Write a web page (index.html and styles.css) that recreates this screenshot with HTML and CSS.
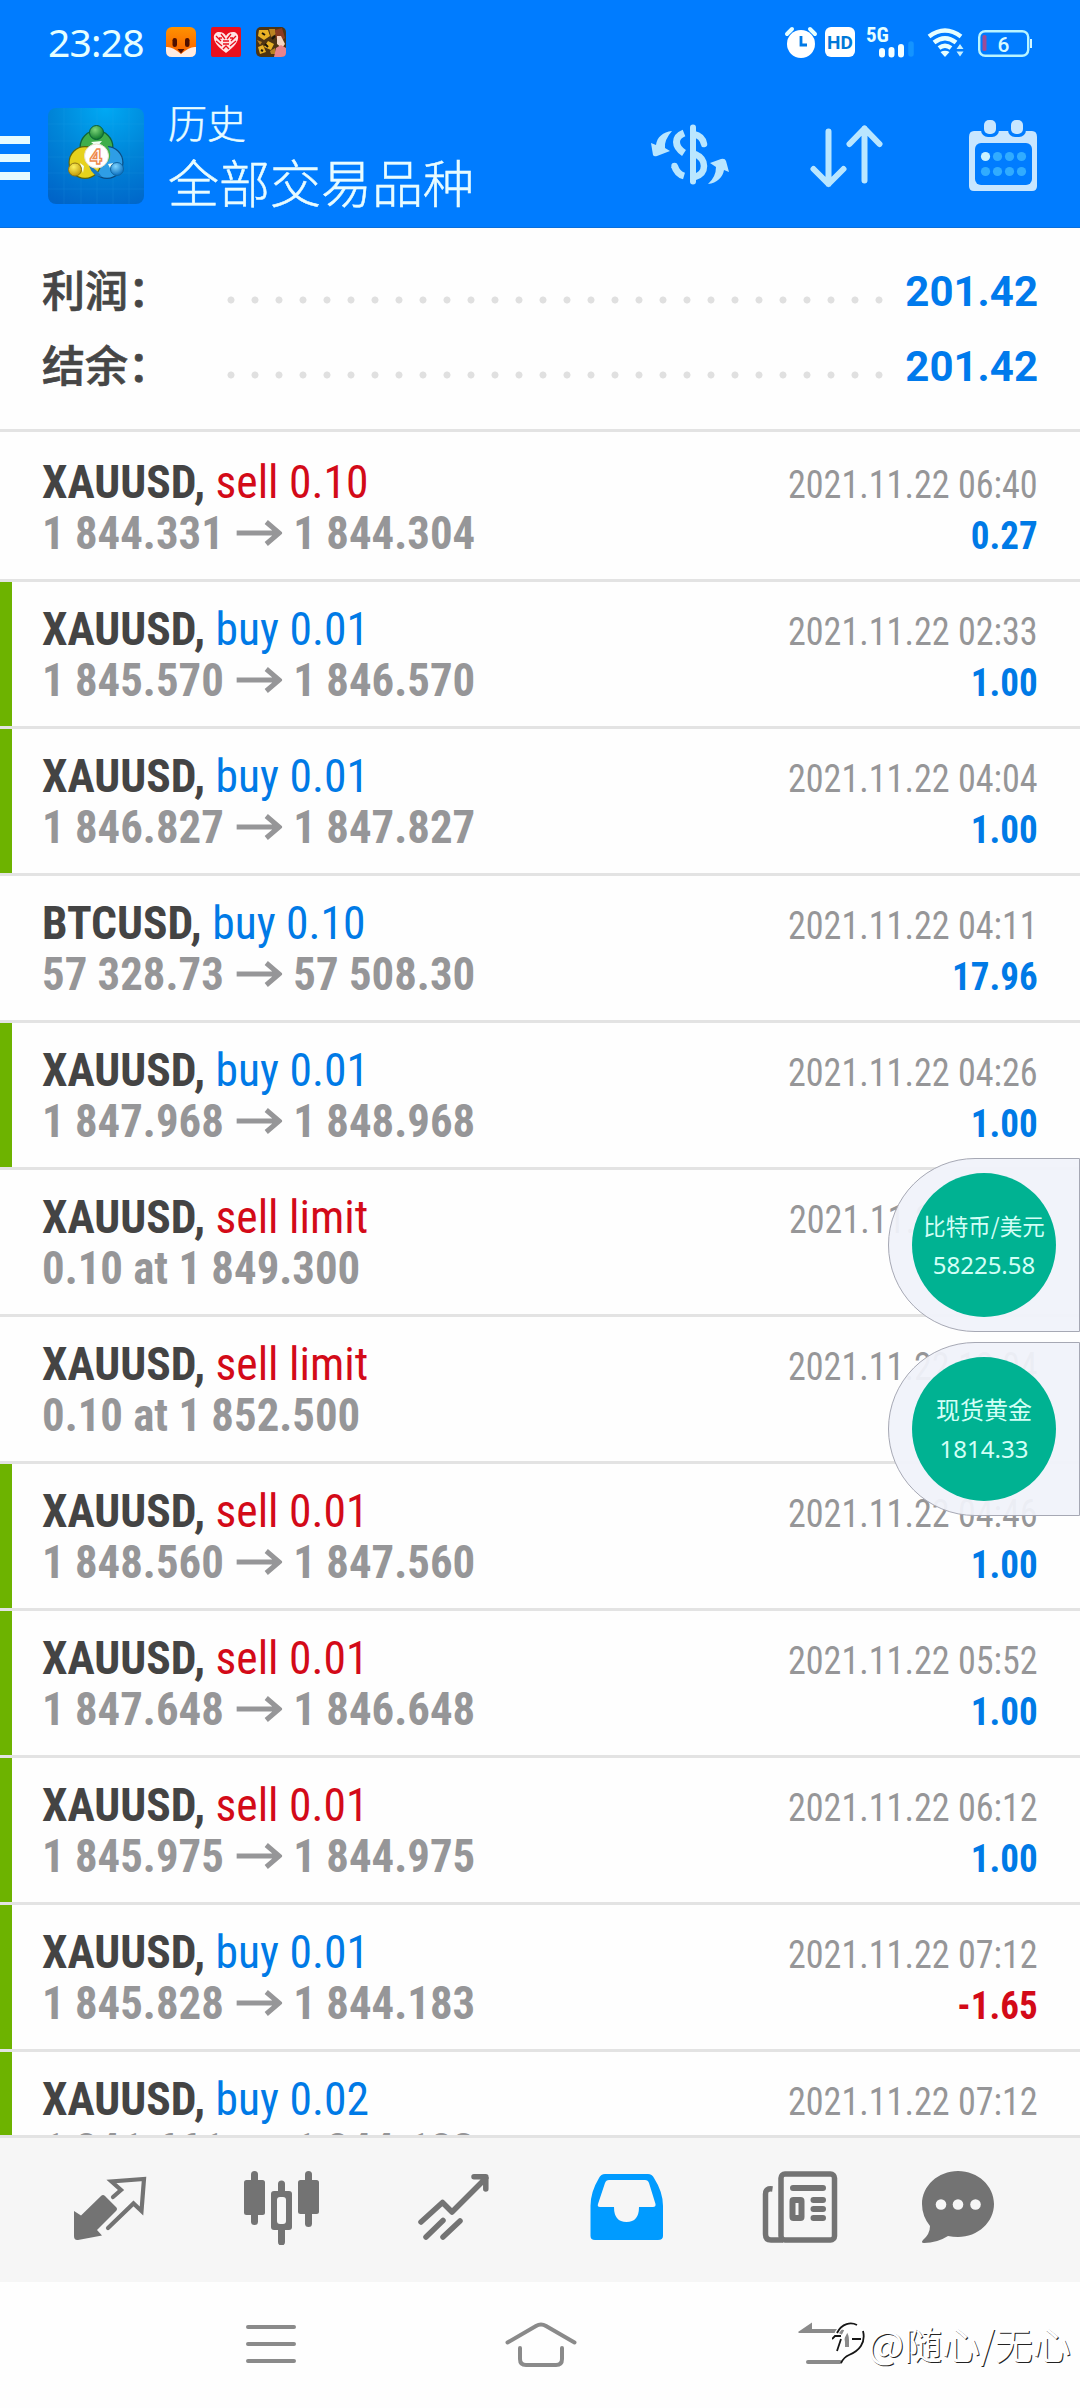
FILE: index.html
```
<!DOCTYPE html>
<html lang="zh-CN">
<head>
<meta charset="utf-8">
<title>历史</title>
<link rel="stylesheet" href="styles.css">
</head>
<body>
<header class="header">
  <div class="status">
    <span class="clock">23:28</span>
    <div class="notifications">
      <svg width="30" height="30" viewBox="0 0 30 30"><defs><linearGradient id="fox" x1="0" y1="0" x2="0" y2="1"><stop offset="0" stop-color="#ff9200"/><stop offset="1" stop-color="#f85c00"/></linearGradient></defs><rect width="30" height="30" rx="6" fill="url(#fox)"/><path d="M0 20Q6 19 15 27Q24 19 30 20V24Q30 30 24 30H6Q0 30 0 24Z" fill="#ffece2"/><rect x="6.500" y="11" width="4.500" height="9" rx="2.200" fill="#501000"/><rect x="19" y="11" width="4.500" height="9" rx="2.200" fill="#501000"/><path d="M11.500 22h7L15 26.500z" fill="#501000"/></svg>
      <svg width="30" height="30" viewBox="0 0 30 30"><rect width="30" height="30" rx="2" fill="#e9101d"/><path d="M15 26C-2 14 2 5 8 5Q13 5 15 9Q17 5 22 5C28 5 32 14 15 26Z" fill="#ffe4e4"/><path d="M5 9l5 5M10 7l4 5M20 7l-4 5M25 9l-5 5M5 14l6 5M25 14l-6 5M12 22l3-3 3 3M12 14h6M12 17h6M8 11h3M19 11h3" stroke="#e9101d" stroke-width="1.300" fill="none"/></svg>
      <svg width="30" height="30" viewBox="0 0 30 30"><rect width="30" height="30" rx="5" fill="#4e3413"/><path d="M3 3h9l2 6-6 4-6-4zM12 14l6 3-3 6-7-3zM2 20l5-2 3 7-6 2z" fill="#e8b125"/><path d="M13 2h6l1 5-5 3zM1 13l5 2-2 3zM14 24l5-3 1 6h-5z" fill="#b98222"/><path d="M19 3l7-2 3 10-5 4-4-4z" fill="#8a3b22"/><path d="M21 9l4 0 4 8-3 4-5-4z" fill="#f5d3c0"/><path d="M20 21l5-3 5 3v5q0 4-5 4h-7z" fill="#e8838b"/><path d="M6 6l3 2M9 17l3 3M16 12l3-3M5 23l2 1" stroke="#171309" stroke-width="2"/></svg>
    </div>
    <div class="signals">
      <svg width="250" height="34" viewBox="784 26 250 34">
        <circle cx="801" cy="44" r="14" fill="#fff"/><path d="M787 34l5-5M815 34l-5-5" stroke="#e6ffff" stroke-width="4" stroke-linecap="round"/><path d="M801 36v9h6" fill="none" stroke="#0079e6" stroke-width="2.800"/>
        <rect x="825" y="27" width="30" height="30" rx="6" fill="#fff"/>
        <text x="840" y="49" class="hd">HD</text>
        <text x="866" y="42" class="five">5G</text>
        <path d="M882 51v3.500M891.500 50v4.500M901 47v7.500" stroke="#f4ffff" stroke-width="6" stroke-linecap="round"/><path d="M911 44v10" stroke="#1494ff" stroke-width="5.500" stroke-linecap="round"/>
        <path d="M929 36.500Q945 24.500 961 36.500" fill="none" stroke="#e6ffff" stroke-width="4.500"/><path d="M934 42.500Q945 34 956 42.500" fill="none" stroke="#e6ffff" stroke-width="4.500"/><path d="M939 48Q945 43.500 951 48" fill="none" stroke="#e6ffff" stroke-width="4.500"/><path d="M940.500 52Q945 49.500 949.500 52L945 57Z" fill="#e6ffff"/>
        <path d="M956.500 49l3.500-5 3.500 5zM956.500 51.500h7l-3.500 5z" fill="#c8f0ff"/>
        <rect x="979.200" y="31.200" width="49" height="24.600" rx="6" fill="none" stroke="#b8f4ff" stroke-width="2.400"/><path d="M1031 39v9" stroke="#d5f8ff" stroke-width="2"/><rect x="982.500" y="35" width="4" height="16" rx="1.500" fill="#9c4b96"/>
        <text x="1003.500" y="51.500" class="batt">6</text>
      </svg>
    </div>
  </div>
  <div class="appbar">
    <div class="menu"><i></i><i></i><i></i></div>
    <svg class="logo" width="96" height="96" viewBox="0 0 96 96">
      <defs>
        <radialGradient id="sky" cx=".6" cy="0" r="1.100"><stop offset="0" stop-color="#00a9f4"/><stop offset=".5" stop-color="#0085d8"/><stop offset="1" stop-color="#0064c8"/></radialGradient>
        <radialGradient id="g" cx=".4" cy=".3" r=".7"><stop offset="0" stop-color="#7fd67a"/><stop offset="1" stop-color="#0e7a2c"/></radialGradient>
        <radialGradient id="y" cx=".4" cy=".3" r=".7"><stop offset="0" stop-color="#fdf25e"/><stop offset="1" stop-color="#c39a08"/></radialGradient>
        <radialGradient id="b" cx=".4" cy=".3" r=".7"><stop offset="0" stop-color="#7ed4ff"/><stop offset="1" stop-color="#0a6fc0"/></radialGradient>
      </defs>
      <rect width="96" height="96" rx="8" fill="url(#sky)"/>
      <path d="M16 0V96M33 0V96M49 0V96M65 0V96M81 0V96M0 16H96M0 33H96M0 49H96M0 65H96M0 81H96" stroke="#35b4f2" stroke-opacity=".13"/>
      <circle cx="48.500" cy="39" r="17" fill="#116438"/><circle cx="48.500" cy="39" r="15.700" fill="#3fae4b"/>
      <circle cx="59" cy="54.500" r="16.500" fill="#0b4b80"/><circle cx="59" cy="54.500" r="15.300" fill="#2e9ee6"/>
      <circle cx="37" cy="54.500" r="16.500" fill="#5d6408"/><circle cx="37" cy="54.500" r="15.300" fill="#e6d21c"/>
      <path d="M41 58Q49 61 54 69Q45 69 41 58Z" fill="#1679c4"/>
      <path d="M56 33Q66 44 60 54L54 48Z" fill="#3fae4b"/>
      <path d="M43 34l11-1-5 6zM32 55l4 3-1 7zM60 56l6-1-3 7z" fill="#f2fff5"/>
      <circle cx="48.500" cy="24.500" r="7" fill="url(#g)" stroke="#0b5e38"/><circle cx="27" cy="61.500" r="6.500" fill="url(#y)" stroke="#907612"/><circle cx="69" cy="61" r="6.500" fill="url(#b)" stroke="#0d64a3"/>
      <circle cx="48.500" cy="48" r="12" fill="#fff" stroke="#e8e0cd"/>
      <text x="48" y="55.500" class="four">4</text>
    </svg>
    <div class="titles"><div class="title">历史</div><div class="subtitle">全部交易品种</div></div>
    <div class="actions">
      <svg width="80" height="70" viewBox="0 0 80 70" fill="none" stroke="#b9e6ff">
        <path d="M43 6.500v54" stroke-width="6" stroke-linecap="round"/>
        <path d="M54 23C53 17 48 14 43.500 13" stroke-width="6.500" stroke-linecap="round"/><path d="M34 12Q26.500 15 26.500 21T34 32" stroke-width="7"/>
        <path d="M45 33Q54 37 54 45T45 56" stroke-width="6.500"/><path d="M24.500 45Q27 53 34 55" stroke-width="7"/><circle cx="24.500" cy="45" r="3.200" fill="#b9e6ff" stroke="none"/>
        <path d="M22 10C13 11 7 16 6 24L1 22 3 34Q4 36 7 35L20 30 15 27Q14 19 22 10Z" fill="#b9e6ff" stroke="none"/>
        <path d="M58 63C67 62 73 56 74 49L79 51 76 40Q75 37 71 38L60 42 66 46Q66 56 58 63Z" fill="#b9e6ff" stroke="none"/>
      </svg>
      <svg width="74" height="66" viewBox="0 0 74 66" fill="none" stroke="#b9e6ff" stroke-width="6" stroke-linecap="round" stroke-linejoin="round"><path d="M18.500 8.500V61M3.500 46l15 15 15-15M54.500 57.500V5.500M39.500 21l15-15.500 15 15.500"/></svg>
      <svg width="70" height="72" viewBox="0 0 70 72"><path d="M6 11H64Q69 11 69 17V66Q69 71 64 71H6Q1 71 1 66V17Q1 11 6 11Z" fill="#c8e6ff"/><rect x="13" y="-4" width="18" height="21" rx="7" fill="#007cff"/><rect x="40" y="-4" width="18" height="21" rx="7" fill="#007cff"/><rect x="16" y="0" width="12" height="14" rx="5" fill="#c8e6ff"/><rect x="43" y="0" width="12" height="14" rx="5" fill="#c8e6ff"/><rect x="7" y="23" width="57" height="42" rx="6" fill="#007cff"/><circle cx="17.500" cy="36.500" r="4.600" fill="#c9f2ff"/><g fill="#31acff"><circle cx="29.500" cy="36.500" r="4.600"/><circle cx="41.500" cy="36.500" r="4.600"/><circle cx="53.500" cy="36.500" r="4.600"/><circle cx="17.500" cy="51.500" r="4.600"/><circle cx="29.500" cy="51.500" r="4.600"/><circle cx="41.500" cy="51.500" r="4.600"/><circle cx="53.500" cy="51.500" r="4.600"/></g></svg>
    </div>
  </div>
</header>

<section class="summary">
  <div class="sum"><span class="label">利润：</span><span class="dots"></span><b>201.42</b></div>
  <div class="sum"><span class="label">结余：</span><span class="dots"></span><b>201.42</b></div>
</section>

<main class="list">
  <div class="row"><div class="deal"><p><b>XAUUSD,</b> <span class="sell">sell 0.10</span></p><p class="price">1 844.331<svg class="arrow" viewBox="0 0 46 26" preserveAspectRatio="none"><path d="M0 13H43M30 2L43 13L30 24"/></svg>1 844.304</p></div><div class="result"><p>2021.11.22 06:40</p><p class="profit">0.27</p></div></div>
  <div class="row tp"><div class="deal"><p><b>XAUUSD,</b> <span class="buy">buy 0.01</span></p><p class="price">1 845.570<svg class="arrow" viewBox="0 0 46 26" preserveAspectRatio="none"><path d="M0 13H43M30 2L43 13L30 24"/></svg>1 846.570</p></div><div class="result"><p>2021.11.22 02:33</p><p class="profit">1.00</p></div></div>
  <div class="row tp"><div class="deal"><p><b>XAUUSD,</b> <span class="buy">buy 0.01</span></p><p class="price">1 846.827<svg class="arrow" viewBox="0 0 46 26" preserveAspectRatio="none"><path d="M0 13H43M30 2L43 13L30 24"/></svg>1 847.827</p></div><div class="result"><p>2021.11.22 04:04</p><p class="profit">1.00</p></div></div>
  <div class="row"><div class="deal"><p><b>BTCUSD,</b> <span class="buy">buy 0.10</span></p><p class="price">57 328.73<svg class="arrow" viewBox="0 0 46 26" preserveAspectRatio="none"><path d="M0 13H43M30 2L43 13L30 24"/></svg>57 508.30</p></div><div class="result"><p>2021.11.22 04:11</p><p class="profit">17.96</p></div></div>
  <div class="row tp"><div class="deal"><p><b>XAUUSD,</b> <span class="buy">buy 0.01</span></p><p class="price">1 847.968<svg class="arrow" viewBox="0 0 46 26" preserveAspectRatio="none"><path d="M0 13H43M30 2L43 13L30 24"/></svg>1 848.968</p></div><div class="result"><p>2021.11.22 04:26</p><p class="profit">1.00</p></div></div>
  <div class="row"><div class="deal"><p><b>XAUUSD,</b> <span class="sell">sell limit</span></p><p class="price">0.10 at 1 849.300</p></div><div class="result"><p class="short">2021.11.22</p></div></div>
  <div class="row"><div class="deal"><p><b>XAUUSD,</b> <span class="sell">sell limit</span></p><p class="price">0.10 at 1 852.500</p></div><div class="result"><p>2021.11.22 12:04</p></div></div>
  <div class="row tp"><div class="deal"><p><b>XAUUSD,</b> <span class="sell">sell 0.01</span></p><p class="price">1 848.560<svg class="arrow" viewBox="0 0 46 26" preserveAspectRatio="none"><path d="M0 13H43M30 2L43 13L30 24"/></svg>1 847.560</p></div><div class="result"><p>2021.11.22 04:46</p><p class="profit">1.00</p></div></div>
  <div class="row tp"><div class="deal"><p><b>XAUUSD,</b> <span class="sell">sell 0.01</span></p><p class="price">1 847.648<svg class="arrow" viewBox="0 0 46 26" preserveAspectRatio="none"><path d="M0 13H43M30 2L43 13L30 24"/></svg>1 846.648</p></div><div class="result"><p>2021.11.22 05:52</p><p class="profit">1.00</p></div></div>
  <div class="row tp"><div class="deal"><p><b>XAUUSD,</b> <span class="sell">sell 0.01</span></p><p class="price">1 845.975<svg class="arrow" viewBox="0 0 46 26" preserveAspectRatio="none"><path d="M0 13H43M30 2L43 13L30 24"/></svg>1 844.975</p></div><div class="result"><p>2021.11.22 06:12</p><p class="profit">1.00</p></div></div>
  <div class="row tp"><div class="deal"><p><b>XAUUSD,</b> <span class="buy">buy 0.01</span></p><p class="price">1 845.828<svg class="arrow" viewBox="0 0 46 26" preserveAspectRatio="none"><path d="M0 13H43M30 2L43 13L30 24"/></svg>1 844.183</p></div><div class="result"><p>2021.11.22 07:12</p><p class="profit loss">-1.65</p></div></div>
  <div class="row tp"><div class="deal"><p><b>XAUUSD,</b> <span class="buy">buy 0.02</span></p><p class="price">1 841.661<svg class="arrow" viewBox="0 0 46 26" preserveAspectRatio="none"><path d="M0 13H43M30 2L43 13L30 24"/></svg>1 844.183</p></div><div class="result"><p>2021.11.22 07:12</p></div></div>
</main>

<nav class="tabs">
  <svg width="76" height="74" viewBox="72 2171 76 74"><path d="M74 2211L81 2215.500 101 2196Q103 2194 105 2196L116 2207Q118 2209 116 2211L97 2230 102 2235.500 78 2240Q74 2240.500 74 2236Z" fill="#737373"/><path d="M113 2197L121 2190 111.500 2181.500 144 2179 141.500 2211 133.500 2203.500 108 2228" fill="none" stroke="#737373" stroke-width="4.200" stroke-linecap="round"/></svg>
  <svg width="76" height="74" viewBox="244 2171 76 74" fill="#737373"><rect x="251" y="2171" width="7" height="54" rx="3.500"/><rect x="244" y="2180" width="21" height="35" rx="2.500"/><rect x="305" y="2171" width="7" height="56" rx="3.500"/><rect x="298" y="2180" width="21" height="34" rx="2.500"/><path d="M281.500 2184v58" stroke="#737373" stroke-width="7" stroke-linecap="round"/><rect x="271" y="2191" width="21" height="39" rx="3"/><rect x="277" y="2197" width="9" height="27" rx="3" fill="#f6f6f6"/></svg>
  <svg width="72" height="74" viewBox="418 2171 72 74" fill="none" stroke="#737373" stroke-width="5.500" stroke-linecap="round" stroke-linejoin="round"><path d="M421 2222L442.500 2202.500 452 2212 486 2178M474 2176.800H485.800V2189" /><path d="M426 2237L443 2220.500M443 2237L460 2221" /></svg>
  <svg width="76" height="74" viewBox="589 2171 76 74"><path d="M605 2174H648Q652 2174 654 2178Q663 2192 663 2206V2236Q663 2240 658 2240H595Q590.500 2240 590.500 2236V2206Q590.500 2192 599 2178Q601 2174 605 2174Z" fill="#009bff"/><path d="M609 2180H645Q648 2180 649 2183L655.500 2204Q656 2207 653 2207H639Q639 2222 626.500 2222T614 2207H600Q597 2207 598 2204L605 2183Q606 2180 609 2180Z" fill="#f6f6f6"/></svg>
  <svg width="76" height="74" viewBox="762 2171 76 74" fill="none" stroke="#737373"><rect x="781" y="2174" width="53.500" height="66" rx="4" stroke-width="5.500"/><path d="M772.500 2189Q765.500 2188 765.500 2194V2234Q765.500 2240 771 2240H783" stroke-width="5.500"/><path d="M793 2188H823M813.500 2200H823M813.500 2209H823M813.500 2218H823" stroke-width="6" stroke-linecap="round"/><rect x="792.500" y="2200" width="9" height="18" stroke-width="6" rx="1"/></svg>
  <svg width="76" height="74" viewBox="920 2171 76 74"><path d="M958 2171C978 2171 994 2186 994 2204S978 2237 958 2237Q953 2237 948 2236Q937 2243 924 2243Q920.500 2243 923 2240Q930 2234 930 2226Q922 2216 922 2204C922 2186 938 2171 958 2171Z" fill="#737373"/><g fill="#f6f6f6"><circle cx="941" cy="2204.500" r="5.300"/><circle cx="958" cy="2204.500" r="5.300"/><circle cx="975.500" cy="2204.500" r="5.300"/></g></svg>
</nav>

<footer class="sysnav">
  <svg width="50" height="44" viewBox="0 0 50 44" fill="none" stroke="#8a8a8a" stroke-width="4" stroke-linecap="round"><path d="M2 5H48M2 22H48M2 39H48"/></svg>
  <svg width="72" height="46" viewBox="0 0 72 46" fill="none" stroke="#8a8a8a" stroke-width="4" stroke-linecap="round"><path d="M2.500 20.500L31 4Q36 1 41 4L69.500 20.500M15 26V37Q15 43 21 43H51Q57 43 57 37V26"/></svg>
  <div class="backwrap">
    <svg width="52" height="44" viewBox="798 2322 52 44"><path d="M798 2332L812 2322.500V2329H838Q849 2329 849 2340V2347H845V2342Q845 2333 836 2333H799Z" fill="#8a8a8a"/><path d="M808 2362H840" stroke="#8a8a8a" stroke-width="4" stroke-linecap="round"/></svg>
    <div class="watermark"><svg width="36" height="44" viewBox="0 0 36 44" fill="none"><path d="M3 16C8 1 23 0 29 9C34 20 26 27 18 30L10 39M6 28C8 21 12 14 15 8M3 16H12" stroke="#fff" stroke-width="4"/><path d="M5 12C10 2 19 1 25 4M31 10C34 22 27 30 17 34Q12 36 9 42M5 30L9 18M0 18L3 15H9M20 18H29" stroke="#161616" stroke-width="1.800"/></svg><span>@随心/无心</span></div>
  </div>
</footer>

<aside class="widget first"><div class="ball"><span>比特币/美元</span><em>58225.58</em></div></aside>
<aside class="widget second"><div class="ball"><span>现货黄金</span><em>1814.33</em></div></aside>
</body>
</html>
```
FILE: styles.css
```
* { box-sizing: border-box; margin: 0; padding: 0; }
body {
  position: relative; width: 1080px; height: 2408px; overflow: hidden;
  display: flex; flex-direction: column; background: #fefefe;
  font-family: "Roboto Condensed", Roboto, "Noto Sans CJK SC", sans-serif;
}
svg { display: block; flex: none; }

.header { height: 228px; flex: none; background: #007cff; border-bottom: 1px solid #0a6fdc; color: #e8fcff; }
.status { height: 84px; display: flex; align-items: center; padding: 0 46px 0 48px; }
.clock { width: 118px; font: 39px/84px "Noto Sans", sans-serif; letter-spacing: -0.8px; color: #e6ffff; }
.notifications { display: flex; gap: 15px; }
.signals { margin-left: auto; padding-top: 2px; }
.signals svg { overflow: visible; }
.hd { font: 700 19px Roboto, sans-serif; fill: #0079d8; text-anchor: middle; }
.five { font: 700 21px "Roboto Condensed", sans-serif; fill: #e6ffff; }
.batt { font: 500 21px Roboto, sans-serif; fill: #d8faff; text-anchor: middle; }

.appbar { height: 144px; display: flex; align-items: center; padding-right: 42px; }
.menu { width: 48px; display: flex; flex-direction: column; gap: 10px; padding-top: 4px; }
.menu i { width: 30px; height: 8px; background: #e6fbff; }
.four { font: 700 21px "Open Sans", sans-serif; fill: #fff; stroke: #ee8a4c; stroke-width: 1.4px; text-anchor: middle; }
.titles { margin-left: 24px; padding-bottom: 7px; font-family: "Noto Sans CJK SC", sans-serif; font-weight: 300; -webkit-text-stroke: .5px #e8fcff; }
.title { font-size: 39px; line-height: 56px; }
.subtitle { font-size: 51px; line-height: 64px; }
.actions { margin-left: auto; display: flex; align-items: center; }
.actions svg:nth-child(2) { margin: 0 84px 0 80px; }

.summary { height: 204px; flex: none; padding: 26px 42px 0; border-bottom: 3px solid #e3e3e3; }
.sum { height: 75px; display: flex; align-items: center; }
.label { width: 177px; padding-bottom: 6px; font: 500 43px/69px "Noto Sans CJK SC", sans-serif; color: #464646; -webkit-text-stroke: .7px #464646; }
.dots { width: 672px; height: 24px; margin-top: 16px; background: radial-gradient(circle, #e0e0e0 3.1px, transparent 3.9px) 0 0 / 24px 24px; }
.sum b { margin-left: auto; font: 700 42px/75px Roboto, sans-serif; color: #007aec; }

.list { height: 1703px; flex: none; padding-top: 3px; overflow: hidden; }
.row { height: 147px; display: flex; justify-content: space-between; border-bottom: 3px solid #e3e3e3; padding: 0 42px; }
.tp { background: linear-gradient(#6db300, #6db300) 0 0 / 12px 100% no-repeat padding-box; }
.deal { padding-top: 21px; font-size: 47px; line-height: 51px; color: #444; white-space: nowrap; }
.deal p { transform: scaleX(.969); transform-origin: 0 50%; }
.deal b { font-weight: 700; }
.sell { color: #d30a18; }
.buy { color: #007ae6; }
.deal .price { display: flex; align-items: center; width: max-content; font-weight: 700; color: #969698; transform: scaleX(.953); }
.arrow { width: 48px; height: 26px; margin: 0 12px 0 13px; fill: none; stroke: #969698; stroke-width: 5; }
.result { padding-top: 25px; font-size: 39px; line-height: 51px; color: #969698; text-align: right; }
.result p { transform: scaleX(.926); transform-origin: 100% 50%; }
.result .short { width: 269px; text-align: left; }
.result .profit { font-weight: 700; color: #007ae6; transform: scaleX(.95); }
.result .loss { color: #d30a18; }

.tabs { height: 147px; flex: none; display: grid; grid-template-columns: 172px 174px 171px 173px 158px 76px; padding: 33px 0 0 72px; background: #f6f6f6; border-top: 3px solid #e3e3e3; }
.sysnav { height: 126px; flex: none; display: flex; align-items: flex-start; padding: 40px 0 0 246px; }
.sysnav > svg:nth-child(2) { margin-left: 209px; }
.backwrap { position: relative; margin-left: 221px; }
.watermark { position: absolute; left: 34px; top: -1px; display: flex; white-space: nowrap; color: #fff; font: 38px/44px "Noto Sans CJK SC", sans-serif; text-shadow: 1px 1px 0 #222; }

.widget { position: absolute; right: 0; width: 192px; height: 174px; padding: 14px 0 0 23px; border: 1px solid #a6a8b4; border-radius: 87px 0 0 87px; background: rgba(240, 242, 250, .94); }
.first { top: 1158px; }
.second { top: 1342px; }
.ball { width: 144px; height: 144px; border-radius: 50%; background: #00b292; color: #d2fff6; display: flex; flex-direction: column; align-items: center; padding-top: 32px; white-space: nowrap; }
.ball span { font: 22.500px/40px "Noto Sans CJK SC", sans-serif; }
.second .ball span { font-size: 24px; }
.ball em { font: 24px/40px "Noto Sans", sans-serif; }
```
